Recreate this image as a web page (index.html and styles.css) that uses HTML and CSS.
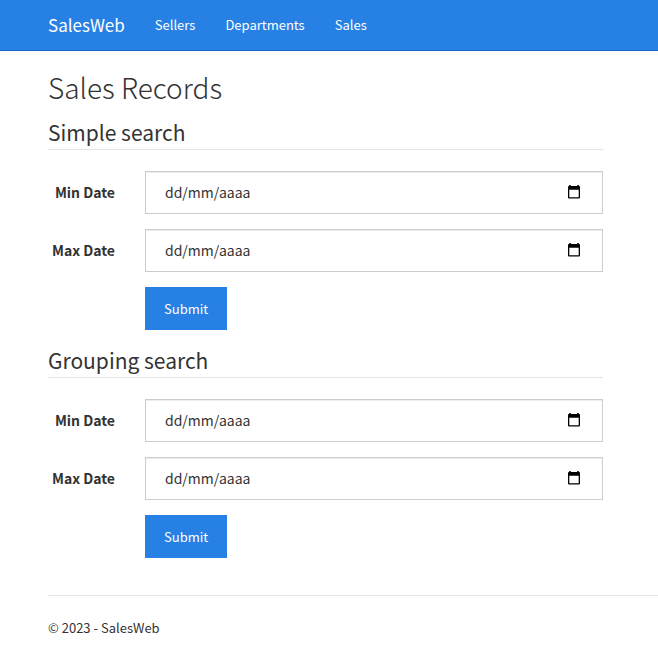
FILE: index.html
```html
<!DOCTYPE html>
<html lang="en">
<head>
<meta charset="utf-8">
<meta name="viewport" content="width=device-width, initial-scale=1">
<title>Sales Records - SalesWeb</title>
<link rel="stylesheet" href="styles.css">
</head>
<body>
<nav class="navbar">
  <a class="brand" href="#">SalesWeb</a>
  <a class="nav-link" href="#">Sellers</a>
  <a class="nav-link" href="#">Departments</a>
  <a class="nav-link" href="#">Sales</a>
</nav>
<div class="page">
  <main class="content">
    <h1>Sales Records</h1>
    <form class="search">
      <h2>Simple search</h2>
      <div class="row">
        <label for="simple-min">Min Date</label>
        <div class="field">
          <input id="simple-min" type="text" placeholder="dd/mm/aaaa">
          <button class="picker" type="button" aria-label="Choose min date"><svg viewBox="0 0 14 14"><path fill-rule="evenodd" d="M2.2 0h1.6v1h6.4V0h1.6v1H12q1 0 1 1v10.5q0 1-1 1H2q-1 0-1-1V2q0-1 1-1h.2zM2.3 4.7v7.5h9.4V4.7z"/></svg></button>
        </div>
      </div>
      <div class="row">
        <label for="simple-max">Max Date</label>
        <div class="field">
          <input id="simple-max" type="text" placeholder="dd/mm/aaaa">
          <button class="picker" type="button" aria-label="Choose max date"><svg viewBox="0 0 14 14"><path fill-rule="evenodd" d="M2.2 0h1.6v1h6.4V0h1.6v1H12q1 0 1 1v10.5q0 1-1 1H2q-1 0-1-1V2q0-1 1-1h.2zM2.3 4.7v7.5h9.4V4.7z"/></svg></button>
        </div>
      </div>
      <div class="row">
        <button class="submit" type="submit">Submit</button>
      </div>
    </form>
    <form class="search">
      <h2>Grouping search</h2>
      <div class="row">
        <label for="group-min">Min Date</label>
        <div class="field">
          <input id="group-min" type="text" placeholder="dd/mm/aaaa">
          <button class="picker" type="button" aria-label="Choose min date"><svg viewBox="0 0 14 14"><path fill-rule="evenodd" d="M2.2 0h1.6v1h6.4V0h1.6v1H12q1 0 1 1v10.5q0 1-1 1H2q-1 0-1-1V2q0-1 1-1h.2zM2.3 4.7v7.5h9.4V4.7z"/></svg></button>
        </div>
      </div>
      <div class="row">
        <label for="group-max">Max Date</label>
        <div class="field">
          <input id="group-max" type="text" placeholder="dd/mm/aaaa">
          <button class="picker" type="button" aria-label="Choose max date"><svg viewBox="0 0 14 14"><path fill-rule="evenodd" d="M2.2 0h1.6v1h6.4V0h1.6v1H12q1 0 1 1v10.5q0 1-1 1H2q-1 0-1-1V2q0-1 1-1h.2zM2.3 4.7v7.5h9.4V4.7z"/></svg></button>
        </div>
      </div>
      <div class="row">
        <button class="submit" type="submit">Submit</button>
      </div>
    </form>
  </main>
  <footer class="footer">© 2023 - SalesWeb</footer>
</div>
</body>
</html>
```
FILE: styles.css
```css
* {
  box-sizing: border-box;
}

body {
  margin: 0;
  background: #fff;
  color: #333;
  font: 14px/22px "Source Sans Pro", "Noto Sans CJK SC", "Open Sans", sans-serif;
}

input,
button {
  font: inherit;
}

.navbar {
  display: flex;
  align-items: center;
  gap: 30px;
  height: 51px;
  padding-left: 48px;
  background: #2780e3;
  border-bottom: 1px solid #1967be;
}

.navbar a {
  color: #fff;
  font-size: 13px;
  text-decoration: none;
}

.navbar .brand {
  font-size: 17px;
}

.page {
  padding-left: 48px;
}

.content {
  padding: 18px 55px 0 0;
}

h1 {
  margin: 0 0 11px;
  font-size: 28px;
  line-height: 36px;
  font-weight: 300;
}

.search h2 {
  margin: 0 0 21px;
  height: 34px;
  border-bottom: 1px solid #e5e5e5;
  font-size: 21px;
  line-height: 32px;
  font-weight: 400;
}

.search + .search {
  margin-top: -1px;
}

.row {
  display: grid;
  grid-template-columns: 67px 1fr;
  column-gap: 30px;
  align-items: center;
  margin-bottom: 15px;
}

.row label {
  padding-bottom: 2px;
  font-weight: 700;
  text-align: right;
}

.field {
  display: flex;
  align-items: center;
  height: 43px;
  padding: 0 21px 2px 19px;
  border: 1px solid #ccc;
  box-shadow: inset 0 1px 1px rgba(0, 0, 0, 0.075);
}

.field input {
  flex: 1;
  min-width: 0;
  padding: 0;
  border: 0;
  background: transparent;
  color: #333;
  outline: 0;
}

.field input::placeholder {
  color: #333;
  opacity: 1;
}

.picker {
  display: flex;
  padding: 0;
  border: 0;
  background: transparent;
}

.picker svg {
  width: 14px;
  height: 14px;
}

.submit {
  grid-column: 2;
  justify-self: start;
  height: 43px;
  padding: 0 19px;
  border: 0;
  background: #2780e3;
  color: #fff;
  font-size: 13px;
}

.footer {
  margin-top: 37px;
  padding: 21px 0;
  border-top: 1px solid #e5e5e5;
  font-size: 13px;
}
```
